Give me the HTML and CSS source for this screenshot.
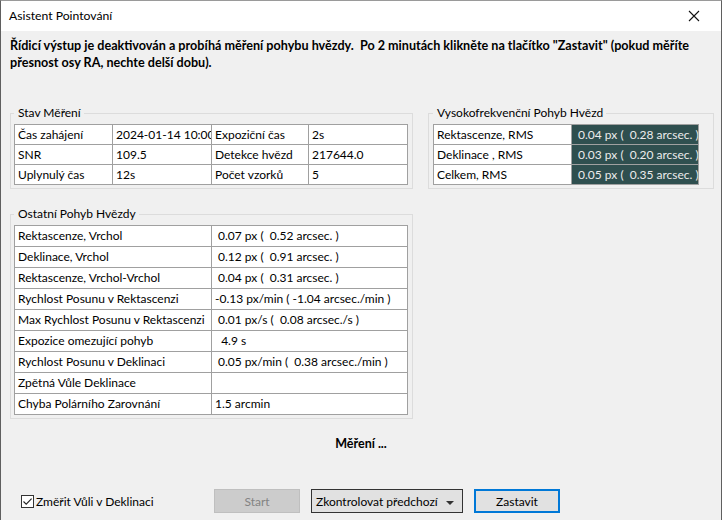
FILE: index.html
```html
<!DOCTYPE html>
<html lang="cs">
<head>
<meta charset="utf-8">
<title>Asistent Pointování</title>
<link rel="stylesheet" href="styles.css">
</head>
<body>
<div class="window">
  <div class="titlebar">
    <span class="title">Asistent Pointování</span>
    <svg class="close" width="12" height="12" viewBox="0 0 12 12"><path d="M1 1 L11 11 M11 1 L1 11" stroke="#111" stroke-width="1.1" fill="none"/></svg>
  </div>
  <div class="content">
    <p class="intro">Řídicí výstup je deaktivován a probíhá měření pohybu hvězdy.&nbsp; Po 2 minutách klikněte na tlačítko "Zastavit" (pokud měříte<br>přesnost osy RA, nechte delší dobu).</p>

    <div class="top-groups">
      <fieldset class="group group-stav">
        <legend>Stav Měření</legend>
        <table class="grid grid-stav">
          <colgroup><col class="c98"><col class="c99"><col class="c97"><col class="c99"></colgroup>
          <tr><td>Čas zahájení</td><td>2024-01-14 10:00:5</td><td>Expoziční čas</td><td>2s</td></tr>
          <tr><td>SNR</td><td>109.5</td><td>Detekce hvězd</td><td>217644.0</td></tr>
          <tr><td>Uplynulý čas</td><td>12s</td><td>Počet vzorků</td><td>5</td></tr>
        </table>
      </fieldset>

      <fieldset class="group group-hf">
        <legend>Vysokofrekvenční Pohyb Hvězd</legend>
        <table class="grid grid-hf">
          <colgroup><col class="c138"><col class="c127"></colgroup>
          <tr><td>Rektascenze, RMS</td><td class="dark"> 0.04 px (  0.28 arcsec. )</td></tr>
          <tr><td>Deklinace , RMS</td><td class="dark"> 0.03 px (  0.20 arcsec. )</td></tr>
          <tr><td>Celkem, RMS</td><td class="dark"> 0.05 px (  0.35 arcsec. )</td></tr>
        </table>
      </fieldset>
    </div>

    <fieldset class="group group-other">
      <legend>Ostatní Pohyb Hvězdy</legend>
      <table class="grid grid-other">
        <colgroup><col class="c197"><col class="c196"></colgroup>
        <tr><td>Rektascenze, Vrchol</td><td class="pre"> 0.07 px (  0.52 arcsec. )</td></tr>
        <tr><td>Deklinace, Vrchol</td><td class="pre"> 0.12 px (  0.91 arcsec. )</td></tr>
        <tr><td>Rektascenze, Vrchol-Vrchol</td><td class="pre"> 0.04 px (  0.31 arcsec. )</td></tr>
        <tr><td>Rychlost Posunu v Rektascenzi</td><td class="pre">-0.13 px/min ( -1.04 arcsec./min )</td></tr>
        <tr><td>Max Rychlost Posunu v Rektascenzi</td><td class="pre"> 0.01 px/s (  0.08 arcsec./s )</td></tr>
        <tr><td>Expozice omezující pohyb</td><td class="pre">  4.9 s</td></tr>
        <tr><td>Rychlost Posunu v Deklinaci</td><td class="pre"> 0.05 px/min (  0.38 arcsec./min )</td></tr>
        <tr><td>Zpětná Vůle Deklinace</td><td></td></tr>
        <tr><td>Chyba Polárního Zarovnání</td><td class="pre">1.5 arcmin</td></tr>
      </table>
    </fieldset>

    <div class="status">Měření ...</div>

    <div class="actions">
      <label class="check">
        <span class="box"><svg width="11" height="11" viewBox="0 0 11 11"><path d="M1.5 5.5 L4.2 8.2 L9.6 2.6" stroke="#222" stroke-width="1.1" fill="none"/></svg></span>
        <span>Změřit Vůli v Deklinaci</span>
      </label>
      <button class="btn btn-disabled" disabled>Start</button>
      <button class="btn btn-drop"><span>Zkontrolovat předchozí</span><span class="caret"></span></button>
      <button class="btn btn-default">Zastavit</button>
    </div>
  </div>
</div>
</body>
</html>
```

FILE: styles.css
```css
* { box-sizing: border-box; }
html, body { margin: 0; padding: 0; }
body {
  background: #f0f0f0;
  font-family: Lato, "Noto Sans", sans-serif;
  font-size: 12px;
  color: #000;
}
.window {
  width: 722px;
  height: 520px;
  background: #f0f0f0;
  border-left: 1px solid #5f5f5f;
  border-right: 1px solid #5f5f5f;
  border-top: 1px solid #9a9a9a;
  overflow: hidden;
}
.titlebar {
  height: 30px;
  background: #fff;
  display: flex;
  align-items: center;
  justify-content: space-between;
  padding: 0 21px 0 8px;
}
.title { line-height: 16px; font-size: 12.2px; }
.close { display: block; }
.content { padding: 0 0 0 9px; }
.intro {
  margin: 6px 0 0 0;
  font-weight: bold;
  font-size: 12.6px;
  line-height: 17px;
  white-space: nowrap;
}
.top-groups {
  display: flex;
  gap: 15px;
  margin-top: 34px;
}
.group {
  margin: 0;
  border: 1px solid #dcdcdc;
  padding: 0 4px 3px 3px;
  min-width: 0;
}
.group legend {
  padding: 0 3px 0 4px;
  line-height: 16px;
  margin-left: 0;
}
.group-stav { width: 403px; }
.group-hf { width: 286px; padding-left: 4px; }
.group-other { width: 403px; margin-top: 17px; }

.grid {
  border-collapse: collapse;
  table-layout: fixed;
  background: #fff;
  margin-top: 3px;
}
.grid td {
  border: 1px solid #a0a0a0;
  padding: 0 3px;
  white-space: nowrap;
  overflow: hidden;
  text-overflow: clip;
  line-height: 16px;
}
.grid-stav { width: 394px; }
.grid-stav tr { height: 20px; }
.grid-hf { width: 266px; }
.grid-hf tr { height: 20px; }
.grid-other { width: 394px; }
.grid-other tr { height: 21px; }
.c98 { width: 98px; }
.c99 { width: 99px; }
.c97 { width: 97px; }
.c138 { width: 138px; }
.c127 { width: 127px; }
.c197 { width: 197px; }
.c196 { width: 196px; }
.grid td.dark {
  background: #2f4f4f;
  color: #ececec;
  white-space: pre;
}
.grid td.pre { white-space: pre; }

.status {
  font-weight: bold;
  font-size: 12.5px;
  text-align: center;
  line-height: 17px;
  margin-top: 16px;
  padding-right: 9px;
}
.actions {
  display: flex;
  align-items: center;
  margin-top: 37px;
  padding-left: 11px;
}
.check {
  display: flex;
  align-items: center;
  width: 193px;
  gap: 2px;
}
.box {
  width: 13px;
  height: 13px;
  border: 1px solid #333;
  background: #fff;
  display: flex;
  align-items: center;
  justify-content: center;
}
.box svg { display: block; }
.btn {
  height: 24px;
  font-family: inherit;
  font-size: 12px;
  padding: 0;
  margin: 0 11px 0 0;
  border: 1px solid #adadad;
  background: #e1e1e1;
  color: #000;
}
.btn-disabled {
  width: 86px;
  background: #cccccc;
  border-color: #bfbfbf;
  color: #838383;
}
.btn-drop {
  width: 152px;
  border-color: #333;
  display: flex;
  align-items: center;
  justify-content: space-between;
  padding: 0 8px 0 4px;
}
.caret {
  width: 0;
  height: 0;
  border-left: 4px solid transparent;
  border-right: 4px solid transparent;
  border-top: 4px solid #333;
  margin-top: 3px;
}
.btn-default {
  width: 86px;
  border: 2px solid #0078d7;
}
```
